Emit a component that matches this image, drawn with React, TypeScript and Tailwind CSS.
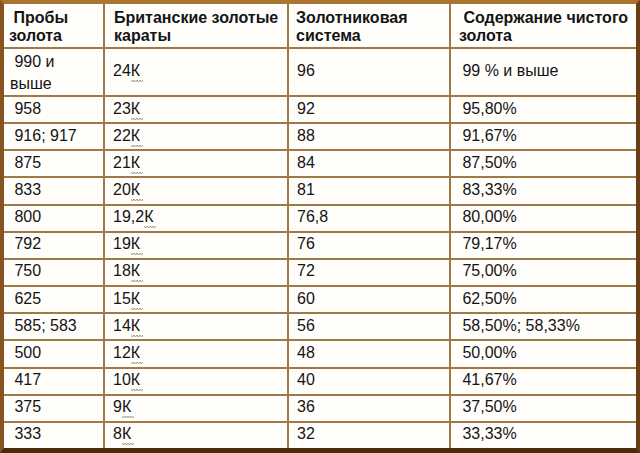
import React from "react";

const rows: [string, string, string, string][] = [
  ["990 и|выше", "24", "96", "99 % и выше"],
  ["958", "23", "92", "95,80%"],
  ["916; 917", "22", "88", "91,67%"],
  ["875", "21", "84", "87,50%"],
  ["833", "20", "81", "83,33%"],
  ["800", "19,2", "76,8", "80,00%"],
  ["792", "19", "76", "79,17%"],
  ["750", "18", "72", "75,00%"],
  ["625", "15", "60", "62,50%"],
  ["585; 583", "14", "56", "58,50%; 58,33%"],
  ["500", "12", "48", "50,00%"],
  ["417", "10", "40", "41,67%"],
  ["375", "9", "36", "37,50%"],
  ["333", "8", "32", "33,33%"],
];

function Cell({ children, className = "" }: { children: React.ReactNode; className?: string }) {
  return <div className={"bg-[#fffefa] flex flex-col justify-center " + className}>{children}</div>;
}

function Karat({ n }: { n: string }) {
  return (
    <span>
      {n}
      <span className="relative inline-block">
        К
        <svg className="absolute left-[0px] bottom-[-3px]" width="12" height="4" viewBox="0 0 12 4">
          <path d="M0 1 L1.5 3 L3 1 L4.5 3 L6 1 L7.5 3 L9 1 L10.5 3 L12 1" fill="none" stroke="#8c9477" strokeWidth="0.9" />
        </svg>
      </span>
    </span>
  );
}

export default function App() {
  return (
    <div
      className="w-[640px] h-[453px] border-t-4 border-l-4 border-r-4 border-b-[5px] border-t-[#a8742f] border-l-[#875320] border-r-[#6a3e14] border-b-[#4d2b0a] bg-[#9f7a48] overflow-hidden text-[#141414]"
      style={{ fontFamily: '"Liberation Sans", Arial, sans-serif' }}
    >
      <div className="grid h-full grid-cols-[99px_182px_160px_185px] grid-rows-[43px_46px_repeat(13,1fr)] gap-[2px]">
        <Cell className="pl-[5px] pt-[3px] font-bold text-[16px] leading-[18px]">
          <div>&nbsp;Пробы</div>
          <div>золота</div>
        </Cell>
        <Cell className="pl-[9px] pt-[3px] font-bold text-[16px] leading-[18px]">
          <div>Британские золотые</div>
          <div>караты</div>
        </Cell>
        <Cell className="pl-[7px] pt-[3px] font-bold text-[16px] leading-[18px]">
          <div>Золотниковая</div>
          <div>система</div>
        </Cell>
        <Cell className="pl-[8px] pt-[3px] font-bold text-[16px] leading-[18px]">
          <div>&nbsp;Содержание чистого</div>
          <div>золота</div>
        </Cell>
        {rows.map((r, i) => (
          <React.Fragment key={i}>
            <Cell className={"pl-[6px] text-[16px] " + (i === 0 ? "leading-[22px] pt-[2px]" : "leading-[18px] pb-[2px]")}>
              {r[0].includes("|") ? (
                <>
                  <div>&nbsp;{r[0].split("|")[0]}</div>
                  <div>{r[0].split("|")[1]}</div>
                </>
              ) : (
                <div>&nbsp;{r[0]}</div>
              )}
            </Cell>
            <Cell className="pl-[8px] text-[16px] leading-[18px] pb-[2px]">
              <div>
                <Karat n={r[1]} />
              </div>
            </Cell>
            <Cell className="pl-[8px] text-[16px] leading-[18px] pb-[2px]">
              <div>{r[2]}</div>
            </Cell>
            <Cell className="pl-[7px] text-[16px] leading-[18px] pb-[2px]">
              <div>&nbsp;{r[3]}</div>
            </Cell>
          </React.Fragment>
        ))}
      </div>
    </div>
  );
}
